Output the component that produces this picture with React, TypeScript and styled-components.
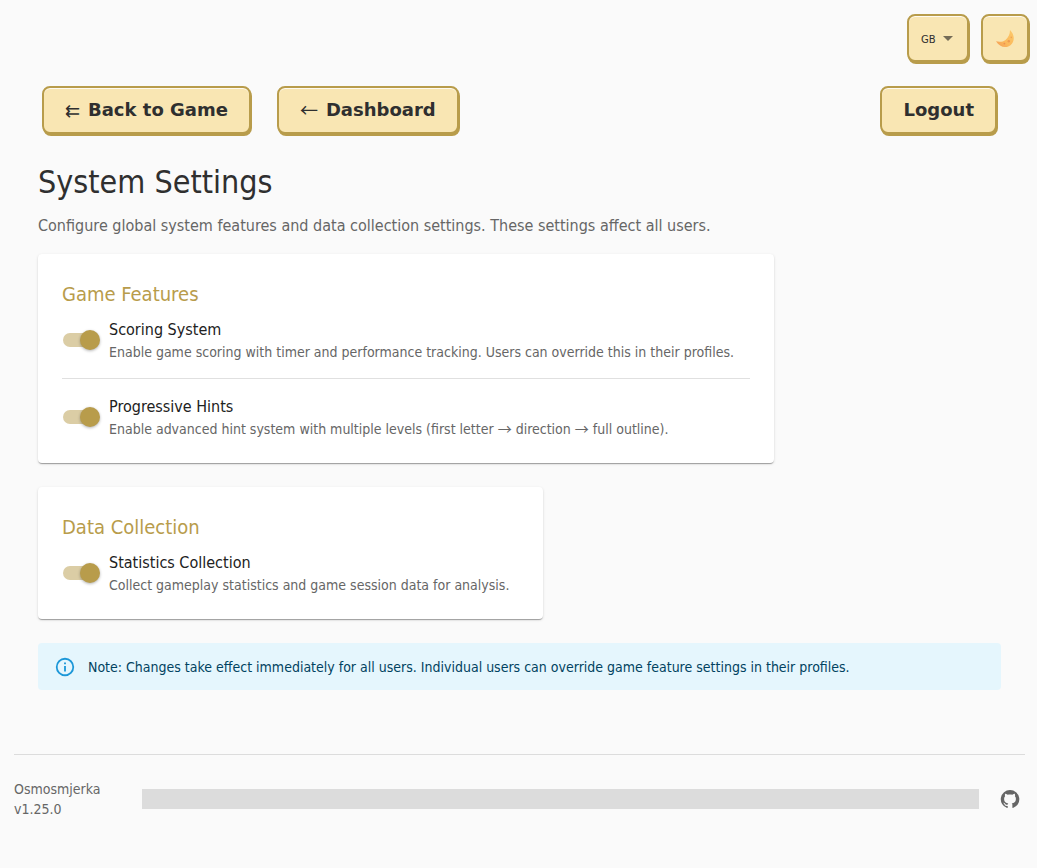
import React from "react";
import styled, { createGlobalStyle } from "styled-components";

const gold = "#b89c4b";
const cream = "#f9e6b3";
const ink = "#2f2f2f";
const muted = "#666";
const bodyFont = '"DejaVu Sans Condensed", "DejaVu Sans", sans-serif';

const GlobalStyle = createGlobalStyle`
  *, *::before, *::after { box-sizing: border-box; }
  body {
    margin: 0;
    background: #fafafa;
    color: ${ink};
    font-family: ${bodyFont};
  }
`;

const Page = styled.div`
  display: flex;
  flex-direction: column;
  min-height: 100vh;
`;

const Toolbar = styled.div`
  display: flex;
  justify-content: flex-end;
  gap: 12px;
  padding: 14px 8px 0;
`;

const raised = `
  border: 2px solid ${gold};
  border-radius: 8px;
  background: ${cream};
  box-shadow: 1px 2px 0 ${gold}, inset 0 1px 0 rgba(255, 255, 255, 0.8);
  color: ${ink};
  cursor: pointer;
`;

const LanguagePicker = styled.div`
  position: relative;
  display: flex;
`;

const LanguageSelect = styled.select`
  ${raised}
  appearance: none;
  width: 62px;
  height: 48px;
  padding: 2px 28px 0 12px;
  font: 10px "DejaVu Sans", sans-serif;
`;

const Caret = styled.svg`
  position: absolute;
  top: 22px;
  right: 16px;
  pointer-events: none;
`;

const ThemeButton = styled.button`
  ${raised}
  display: grid;
  place-items: center;
  width: 48px;
  height: 48px;
  padding: 2px 0 0;
`;

const Nav = styled.nav`
  display: flex;
  gap: 26px;
  padding: 24px 40px 0 42px;
`;

const NavButton = styled.button<{ $end?: boolean }>`
  ${raised}
  display: flex;
  align-items: center;
  gap: 8px;
  height: 48px;
  margin-left: ${(p) => (p.$end ? "auto" : "0")};
  padding: 0 21px 2px;
  font: bold 18px "DejaVu Sans", sans-serif;
`;

const Arrow = styled.span`
  font-family: "Noto Sans CJK JP", sans-serif;
  font-weight: 400;
  line-height: 1;
`;

const Main = styled.main`
  display: flex;
  flex-direction: column;
  padding: 24px 36px 0 38px;
`;

const Title = styled.h1`
  margin: 0;
  font-size: 32px;
  font-weight: 400;
  line-height: 48px;
`;

const Lead = styled.p`
  margin: 8px 0 16px;
  color: ${muted};
  font-size: 16px;
  line-height: 24px;
`;

const Card = styled.section<{ $max: number }>`
  width: 100%;
  max-width: ${(p) => p.$max}px;
  margin-bottom: 24px;
  padding: 24px;
  border-radius: 4px;
  background: #fff;
  box-shadow: 0 2px 1px -1px rgba(0, 0, 0, 0.2), 0 1px 1px rgba(0, 0, 0, 0.14),
    0 1px 3px rgba(0, 0, 0, 0.12);
`;

const CardTitle = styled.h2`
  margin: 0 0 8px;
  color: ${gold};
  font-size: 20px;
  font-weight: 400;
  line-height: 32px;
`;

const SettingRow = styled.label`
  display: flex;
  align-items: center;
  cursor: pointer;

  & + & {
    margin-top: 16px;
    padding-top: 16px;
    border-top: 1px solid #e0e0e0;
  }
`;

const Switch = styled.input`
  appearance: none;
  position: relative;
  flex: none;
  width: 34px;
  height: 14px;
  margin: 0 12px 0 1px;
  border-radius: 7px;
  background: #bdbdbd;
  cursor: pointer;

  &::before {
    content: "";
    position: absolute;
    top: -3px;
    left: -3px;
    width: 20px;
    height: 20px;
    border-radius: 50%;
    background: #fafafa;
    box-shadow: 0 1px 3px rgba(0, 0, 0, 0.3);
  }

  &:checked { background: #dbcda5; }
  &:checked::before { left: 17px; background: ${gold}; }
`;

const SettingText = styled.span`
  display: flex;
  flex-direction: column;
`;

const SettingName = styled.span`
  color: #212121;
  font-size: 16px;
  line-height: 24px;
`;

const SettingHelp = styled.span`
  color: ${muted};
  font-size: 14px;
  line-height: 20px;
`;

const Notice = styled.div`
  display: flex;
  align-items: center;
  gap: 12px;
  min-height: 47px;
  padding: 6px 16px;
  border-radius: 4px;
  background: #e5f6fd;
  color: #014361;
  font-size: 14px;
  line-height: 20px;
`;

const Footer = styled.footer`
  display: flex;
  align-items: center;
  margin: 64px 12px 0 14px;
  padding-top: 24px;
  border-top: 1px solid #dcdcdc;
`;

const Version = styled.p`
  width: 128px;
  margin: 0;
  color: ${muted};
  font-size: 14px;
  line-height: 20px;
`;

const Marquee = styled.div`
  flex: 1;
  height: 20px;
  background: #dcdcdc;
`;

const RepoLink = styled.a`
  display: flex;
  margin: 0 5px 0 21px;
  color: ${muted};
`;

type Setting = { name: string; help: React.ReactNode };

const groups: { title: string; max: number; settings: Setting[] }[] = [
  {
    title: "Game Features",
    max: 736,
    settings: [
      {
        name: "Scoring System",
        help: "Enable game scoring with timer and performance tracking. Users can override this in their profiles.",
      },
      {
        name: "Progressive Hints",
        help: (
          <>
            Enable advanced hint system with multiple levels (first letter{" "}
            <Arrow>→</Arrow> direction <Arrow>→</Arrow> full outline).
          </>
        ),
      },
    ],
  },
  {
    title: "Data Collection",
    max: 505,
    settings: [
      {
        name: "Statistics Collection",
        help: "Collect gameplay statistics and game session data for analysis.",
      },
    ],
  },
];

function MoonIcon() {
  return (
    <svg width="20" height="20" viewBox="0 0 20 20" aria-hidden="true">
      <defs>
        <linearGradient id="moon" x1="0" y1="1" x2="1" y2="0">
          <stop offset="0" stopColor="#f39a55" />
          <stop offset="0.4" stopColor="#fbb95c" />
          <stop offset="1" stopColor="#fcc96a" />
        </linearGradient>
      </defs>
      <path
        d="M15 1c4.200 4.200 5 9.800 1.900 13.700C12.900 19.800 5 19.200 1 12.300c3.600.9 7 .6 9.500-1.400C13.200 8.700 15 5.600 15 1z"
        fill="url(#moon)"
      />
      <circle cx="13.800" cy="12.200" r="1.200" fill="#ee9a50" />
      <circle cx="9.400" cy="14.600" r="0.900" fill="#ee9150" />
      <circle cx="16.300" cy="8.400" r="0.800" fill="#f0a354" />
    </svg>
  );
}

function InfoIcon() {
  return (
    <svg width="22" height="22" viewBox="0 0 24 24" fill="#1c97d8" aria-hidden="true">
      <path d="M11,9H13V7H11M12,20C7.59,20 4,16.41 4,12C4,7.59 7.59,4 12,4C16.41,4 20,7.59 20,12C20,16.41 16.41,20 12,20M12,2A10,10 0 0,0 2,12A10,10 0 0,0 12,22A10,10 0 0,0 22,12A10,10 0 0,0 12,2M11,17H13V11H11V17Z" />
    </svg>
  );
}

function GitHubIcon() {
  return (
    <svg width="20" height="20" viewBox="0 0 24 24" fill="currentColor" aria-hidden="true">
      <path d="M12 1.27a11 11 0 00-3.48 21.46c.55.09.73-.28.73-.55v-1.84c-3.03.64-3.67-1.46-3.67-1.46-.55-1.29-1.28-1.65-1.28-1.65-.92-.65.1-.65.1-.65 1.1 0 1.73 1.1 1.73 1.1.92 1.65 2.57 1.2 3.21.92a2 2 0 01.64-1.47c-2.47-.27-5.04-1.19-5.04-5.5 0-1.1.46-2.1 1.2-2.84a3.76 3.76 0 010-2.93s.91-.28 3.11 1.1c1.8-.49 3.7-.49 5.5 0 2.1-1.38 3.02-1.1 3.02-1.1a3.76 3.76 0 01.1 2.93c.83.74 1.2 1.74 1.2 2.94 0 4.21-2.57 5.13-5.04 5.4.45.37.82.92.82 2.02v3.03c0 .27.1.64.73.55A11 11 0 0012 1.27" />
    </svg>
  );
}

export default function App() {
  return (
    <Page>
      <GlobalStyle />
      <Toolbar>
        <LanguagePicker>
          <LanguageSelect aria-label="Language" defaultValue="GB">
            <option>GB</option>
          </LanguageSelect>
          <Caret width="10" height="5" viewBox="0 0 10 5" aria-hidden="true">
            <path d="M0 0h10L5 5z" fill="#756c57" />
          </Caret>
        </LanguagePicker>
        <ThemeButton type="button" aria-label="Toggle dark mode">
          <MoonIcon />
        </ThemeButton>
      </Toolbar>

      <Nav>
        <NavButton type="button">
          <Arrow>⇇</Arrow>Back to Game
        </NavButton>
        <NavButton type="button">
          <Arrow>←</Arrow>Dashboard
        </NavButton>
        <NavButton type="button" $end>
          Logout
        </NavButton>
      </Nav>

      <Main>
        <Title>System Settings</Title>
        <Lead>
          Configure global system features and data collection settings. These
          settings affect all users.
        </Lead>
        {groups.map((group) => (
          <Card key={group.title} $max={group.max}>
            <CardTitle>{group.title}</CardTitle>
            {group.settings.map((setting) => (
              <SettingRow key={setting.name}>
                <Switch type="checkbox" defaultChecked />
                <SettingText>
                  <SettingName>{setting.name}</SettingName>
                  <SettingHelp>{setting.help}</SettingHelp>
                </SettingText>
              </SettingRow>
            ))}
          </Card>
        ))}
        <Notice role="note">
          <InfoIcon />
          <span>
            Note: Changes take effect immediately for all users. Individual
            users can override game feature settings in their profiles.
          </span>
        </Notice>
      </Main>

      <Footer>
        <Version>
          Osmosmjerka
          <br />
          v1.25.0
        </Version>
        <Marquee />
        <RepoLink href="#" aria-label="GitHub repository">
          <GitHubIcon />
        </RepoLink>
      </Footer>
    </Page>
  );
}
